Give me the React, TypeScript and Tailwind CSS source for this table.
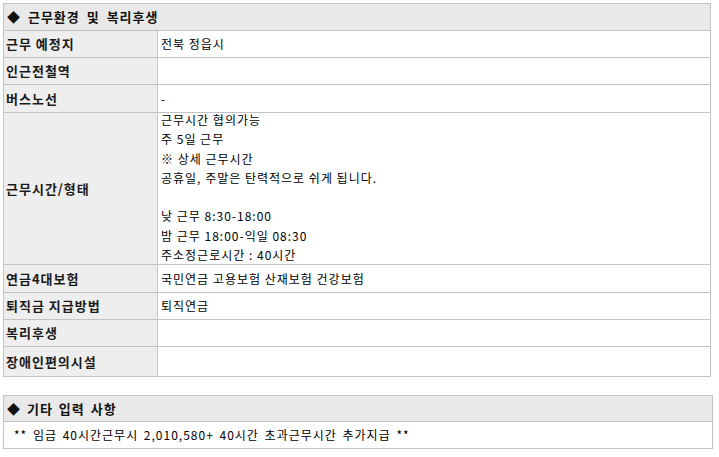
import React from 'react';

const font = { fontFamily: '"Noto Sans CJK KR", "Noto Sans", sans-serif' };

type Row = { label: string; value?: React.ReactNode; h: string; top?: boolean };

const rows: Row[] = [
  { label: '근무 예정지', value: '전북 정읍시', h: 'h-[27px]' },
  { label: '인근전철역', h: 'h-[27px]' },
  { label: '버스노선', value: '-', h: 'h-[28px]' },
  {
    label: '근무시간/형태',
    h: 'h-[152px]',
    top: true,
    value: (
      <div className="-mt-[3px] flex flex-col leading-[19.3px]">
        <span>근무시간 협의가능</span>
        <span>주 5일 근무</span>
        <span>※ 상세 근무시간</span>
        <span>공휴일, 주말은 탄력적으로 쉬게 됩니다.</span>
        <span>&nbsp;</span>
        <span>낮 근무 8:30-18:00</span>
        <span>밤 근무 18:00-익일 08:30</span>
        <span>주소정근로시간 : 40시간</span>
      </div>
    ),
  },
  { label: '연금4대보험', value: '국민연금 고용보험 산재보험 건강보험', h: 'h-[28px]' },
  { label: '퇴직금 지급방법', value: '퇴직연금', h: 'h-[27px]' },
  { label: '복리후생', h: 'h-[27px]' },
  { label: '장애인편의시설', h: 'h-[30px]' },
];

export default function App() {
  return (
    <div className="w-[719px] h-[457px] bg-white pt-[3px] pl-[3px] text-[12px] tracking-[1px] text-black" style={font}>
      <div className="w-[708px] border border-[#c3c3c3]">
        <div className="h-[26px] flex items-center bg-[#e9e9e9] pl-[3px] font-bold text-[13px] tracking-[1px] [word-spacing:3px] text-[#111]">
          ◆ 근무환경 및 복리후생
        </div>
        {rows.map((r) => (
          <div key={r.label} className={`flex border-t border-[#c3c3c3] ${r.h}`}>
            <div className="w-[153px] shrink-0 bg-[#eeeeee] flex items-center pl-[2px] font-bold text-[13px] tracking-[1px] text-[#1a1a1a]">
              {r.label}
            </div>
            <div className={`flex-1 border-l border-[#c3c3c3] flex pl-[3px] ${r.top ? 'items-start' : 'items-center'}`}>
              {r.value}
            </div>
          </div>
        ))}
      </div>

      <div className="mt-[18px] w-[710px] border border-[#c3c3c3]">
        <div className="h-[25px] flex items-center bg-[#e9e9e9] pl-[3px] font-bold text-[13px] tracking-[1px] [word-spacing:2px] text-[#111]">
          ◆ 기타 입력 사항
        </div>
        <div className="h-[27px] border-t border-[#c3c3c3] flex items-center pl-[10px] [word-spacing:2px]">
          ** 임금 40시간근무시 2,010,580+ 40시간 초과근무시간 추가지급 **
        </div>
      </div>
    </div>
  );
}
